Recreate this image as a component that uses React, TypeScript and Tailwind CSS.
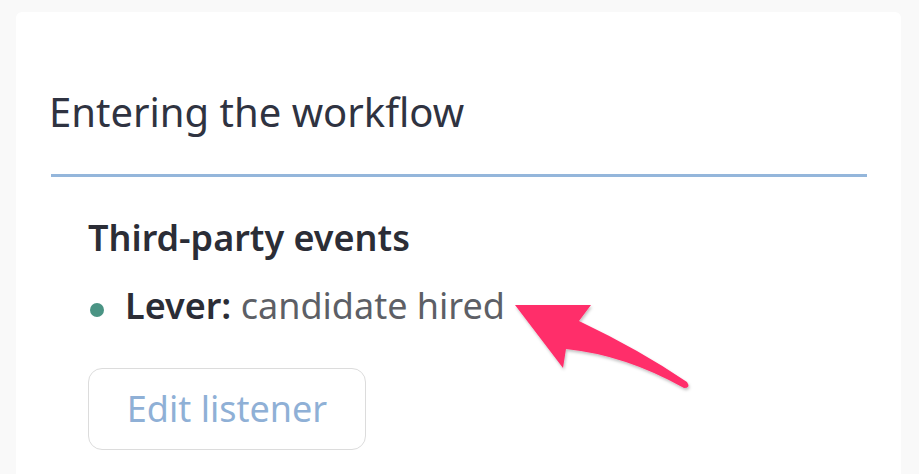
import React from 'react';

const Arrow = () => (
  <svg
    className="absolute left-0 top-0 pointer-events-none"
    width="919"
    height="474"
    viewBox="0 0 919 474"
  >
    <defs>
      <filter id="arrowShadow" x="-20%" y="-20%" width="140%" height="140%">
        <feDropShadow dx="1" dy="2" stdDeviation="1.5" floodColor="#000" floodOpacity="0.25" />
      </filter>
    </defs>
    <path
      d="M515 305 L591 305 L579 321 Q640 350 687 382 Q691 388 684 388 Q625 355 566 349 L563 368 Z"
      fill="#ff2d6b"
      filter="url(#arrowShadow)"
    />
  </svg>
);

const App: React.FC = () => {
  return (
    <div
      className="relative w-[919px] h-[474px] overflow-hidden bg-[#f9f9f9] pt-[12px] pl-[16px] pr-[18px]"
      style={{ fontFamily: '"Noto Sans", "Open Sans", sans-serif' }}
    >
      <div className="bg-white h-[480px] rounded-md pt-[76px] pl-[35px] pr-[34px]">
        <h2 className="-ml-[2px] text-[40px] leading-[48px] text-[#2f3341] font-normal">
          Entering the workflow
        </h2>
        <div className="mt-[38px] h-[3px] bg-[#94b6db]" />
        <div className="pl-[37px] pt-[39px]">
          <h3 className="text-[36px] leading-[44px] font-semibold text-[#2b2d36]">Third-party events</h3>
          <div className="mt-[24px] flex items-center gap-[21px] pl-[2px]">
            <span className="w-[14px] h-[14px] shrink-0 rounded-full bg-[#4a9484] mt-[8px]" />
            <p className="text-[36px] leading-[44px] text-[#5d5f66]">
              <span className="font-semibold text-[#2b2d36]">Lever:</span> candidate hired
            </p>
          </div>
          <button className="mt-[40px] w-[278px] h-[82px] rounded-[14px] border border-[#dcdcdc] text-[36px] text-[#8fb0d6] bg-white">
            Edit listener
          </button>
        </div>
      </div>
      <Arrow />
    </div>
  );
};

export default App;
